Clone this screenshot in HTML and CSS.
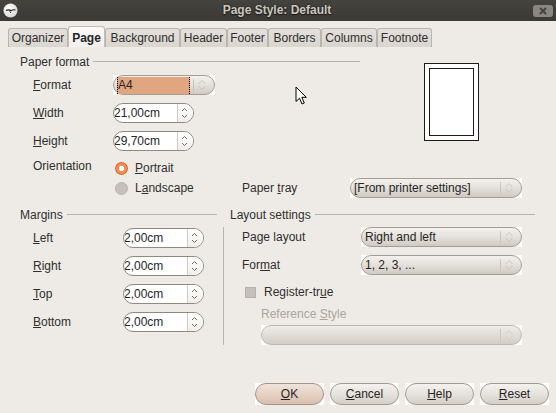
FILE: index.html
```html
<!DOCTYPE html>
<html>
<head>
<meta charset="utf-8">
<link rel="stylesheet" href="styles.css">
</head>
<body>
<div class="window">
  <header class="titlebar">
    <svg class="app-icon" width="15" height="15" viewBox="0 0 15 15">
      <defs><radialGradient id="ig" cx="0.4" cy="0.35" r="0.7"><stop offset="0" stop-color="#ffffff"/><stop offset="1" stop-color="#d6d6d6"/></radialGradient></defs>
      <circle cx="7.5" cy="7.5" r="7" fill="url(#ig)"/>
      <path d="M3 7.5 Q6 6 8 7.8 Q10 6.2 12.5 7" stroke="#222" stroke-width="1.2" fill="none"/>
      <path d="M6.5 8.5 L8 9.8" stroke="#222" stroke-width="1"/>
    </svg>
    <div class="title">Page Style: Default</div>
    <div class="close"><svg width="10" height="8" viewBox="0 0 10 8"><path d="M2 1 L8 7 M8 1 L2 7" stroke="#45433f" stroke-width="2"/></svg></div>
  </header>

  <nav class="tabs">
    <div class="tab w-org">Organizer</div>
    <div class="tab active w-page">Page</div>
    <div class="tab w-bg">Background</div>
    <div class="tab w-hdr">Header</div>
    <div class="tab w-ftr">Footer</div>
    <div class="tab w-bor">Borders</div>
    <div class="tab w-col">Columns</div>
    <div class="tab w-fn">Footnote</div>
  </nav>

  <main class="panel">
    <div class="paper-top">
      <section class="paper">
        <div class="sect-head">Paper format</div>
        <div class="field first">
          <span class="lbl"><u>F</u>ormat</span>
          <div class="combo w-format">
            <div class="pill">
              <span class="ctext selected">A4</span>
              <span class="sep"></span>
              <svg class="chev" width="10" height="14" viewBox="0 0 10 14"><path d="M1.5 6 L5 2.5 L8.5 6 M1.5 8 L5 11.5 L8.5 8" stroke="#c9c4bd" stroke-width="1" fill="none"/></svg>
            </div>
          </div>
        </div>
        <div class="field">
          <span class="lbl"><u>W</u>idth</span>
          <div class="spin"><span class="val">21,00cm</span><span class="spbtn"><svg width="7" height="14" viewBox="0 0 7 14"><path d="M1 5 L3.5 2.5 L6 5 M1 9 L3.5 11.5 L6 9" stroke="#6f6b65" stroke-width="1" fill="none"/></svg></span></div>
        </div>
        <div class="field">
          <span class="lbl"><u>H</u>eight</span>
          <div class="spin"><span class="val">29,70cm</span><span class="spbtn"><svg width="7" height="14" viewBox="0 0 7 14"><path d="M1 5 L3.5 2.5 L6 5 M1 9 L3.5 11.5 L6 9" stroke="#6f6b65" stroke-width="1" fill="none"/></svg></span></div>
        </div>
      </section>
      <div class="preview"><div class="page-inner"></div></div>
    </div>

    <div class="orient">
      <span class="olbl">Orientation</span>
      <div class="radio"><span class="rdot on"></span><span><u>P</u>ortrait</span></div>
      <span></span><span></span>
      <span></span>
      <div class="radio"><span class="rdot"></span><span>L<u>a</u>ndscape</span></div>
      <span class="tray-lbl">Paper <u>t</u>ray</span>
      <div class="combo w-tray">
        <div class="pill">
          <span class="ctext">[From printer settings]</span>
          <span class="sep"></span>
          <svg class="chev" width="10" height="14" viewBox="0 0 10 14"><path d="M1.5 6 L5 2.5 L8.5 6 M1.5 8 L5 11.5 L8.5 8" stroke="#c9c4bd" stroke-width="1" fill="none"/></svg>
        </div>
      </div>
    </div>

    <div class="bottom">
      <section class="margins">
        <div class="sect-head">Margins</div>
        <div class="field first"><span class="mlbl"><u>L</u>eft</span><div class="spin"><span class="val">2,00cm</span><span class="spbtn"><svg width="7" height="14" viewBox="0 0 7 14"><path d="M1 5 L3.5 2.5 L6 5 M1 9 L3.5 11.5 L6 9" stroke="#6f6b65" stroke-width="1" fill="none"/></svg></span></div></div>
        <div class="field"><span class="mlbl"><u>R</u>ight</span><div class="spin"><span class="val">2,00cm</span><span class="spbtn"><svg width="7" height="14" viewBox="0 0 7 14"><path d="M1 5 L3.5 2.5 L6 5 M1 9 L3.5 11.5 L6 9" stroke="#6f6b65" stroke-width="1" fill="none"/></svg></span></div></div>
        <div class="field"><span class="mlbl"><u>T</u>op</span><div class="spin"><span class="val">2,00cm</span><span class="spbtn"><svg width="7" height="14" viewBox="0 0 7 14"><path d="M1 5 L3.5 2.5 L6 5 M1 9 L3.5 11.5 L6 9" stroke="#6f6b65" stroke-width="1" fill="none"/></svg></span></div></div>
        <div class="field"><span class="mlbl"><u>B</u>ottom</span><div class="spin"><span class="val">2,00cm</span><span class="spbtn"><svg width="7" height="14" viewBox="0 0 7 14"><path d="M1 5 L3.5 2.5 L6 5 M1 9 L3.5 11.5 L6 9" stroke="#6f6b65" stroke-width="1" fill="none"/></svg></span></div></div>
      </section>

      <section class="layout">
        <div class="sect-head">Layout settings</div>
        <div class="layout-body">
          <div class="lrow">
            <span class="llbl">Page layout</span>
            <div class="combo w-layout">
              <div class="pill">
                <span class="ctext">Right and left</span>
                <span class="sep"></span>
                <svg class="chev" width="10" height="14" viewBox="0 0 10 14"><path d="M1.5 6 L5 2.5 L8.5 6 M1.5 8 L5 11.5 L8.5 8" stroke="#c9c4bd" stroke-width="1" fill="none"/></svg>
              </div>
            </div>
          </div>
          <div class="lrow gap">
            <span class="llbl">For<u>m</u>at</span>
            <div class="combo w-layout">
              <div class="pill">
                <span class="ctext">1, 2, 3, ...</span>
                <span class="sep"></span>
                <svg class="chev" width="10" height="14" viewBox="0 0 10 14"><path d="M1.5 6 L5 2.5 L8.5 6 M1.5 8 L5 11.5 L8.5 8" stroke="#c9c4bd" stroke-width="1" fill="none"/></svg>
              </div>
            </div>
          </div>
          <div class="check-row">
            <span class="checkbox"></span>
            <span>Register-tr<u>u</u>e</span>
          </div>
          <div class="ref-lbl">Reference <u>S</u>tyle</div>
          <div class="combo w-ref disabled">
            <div class="pill">
              <span class="ctext"></span>
              <span class="sep"></span>
              <svg class="chev" width="10" height="14" viewBox="0 0 10 14"><path d="M1.5 6 L5 2.5 L8.5 6 M1.5 8 L5 11.5 L8.5 8" stroke="#d2cdc6" stroke-width="1" fill="none"/></svg>
            </div>
          </div>
        </div>
      </section>
    </div>
  </main>

  <footer class="buttons">
    <div class="btn default"><span class="bpill"><u>O</u>K</span></div>
    <div class="btn"><span class="bpill"><u>C</u>ancel</span></div>
    <div class="btn"><span class="bpill"><u>H</u>elp</span></div>
    <div class="btn"><span class="bpill"><u>R</u>eset</span></div>
  </footer>
</div>

<svg class="cursor" width="13" height="20" viewBox="0 0 13 20">
  <path d="M1 1 L1 15.5 L4.5 12.2 L7 18 L9.3 17 L6.8 11.3 L11.3 11.3 Z" fill="#fff" stroke="#000" stroke-width="1" stroke-linejoin="round"/>
</svg>
</body>
</html>
```

FILE: styles.css
```css
html, body {
  margin: 0;
  padding: 0;
}
body {
  width: 556px;
  height: 413px;
  overflow: hidden;
  position: relative;
  background: #eeebe6;
  font-family: "Liberation Sans", Arial, sans-serif;
  font-size: 12px;
  color: #2f2f2f;
}
u { text-decoration: underline; text-underline-offset: 1px; }

.window {
  display: flex;
  flex-direction: column;
  height: 413px;
}

/* title bar */
.titlebar {
  flex: none;
  height: 21px;
  background: linear-gradient(#45433e, #3b3935);
  display: flex;
  align-items: center;
}
.app-icon { margin: 0 3px 0 3px; flex: none; }
.title {
  flex: 1;
  text-align: center;
  font-weight: bold;
  color: #cbc7bf;
  text-shadow: 0 0 2px #1c1b19, 0 1px 1px #1c1b19;
  line-height: 21px;
}
.close {
  flex: none;
  width: 20px;
  height: 12px;
  margin-right: 3px;
  border-radius: 3px;
  background: #8a8680;
  display: flex;
  align-items: center;
  justify-content: center;
}

/* tabs */
.tabs {
  flex: none;
  display: flex;
  align-items: flex-end;
  height: 21px;
  margin-top: 5px;
  padding-left: 8px;
}
.tab {
  box-sizing: border-box;
  height: 19px;
  line-height: 18px;
  text-align: center;
  border: 1px solid #b9b4ac;
  border-bottom: none;
  border-radius: 3px 3px 0 0;
  background: linear-gradient(#e4e0db, #d9d5cf);
  color: #2f2f2f;
  white-space: nowrap;
}
.tab.active {
  height: 21px;
  padding-top: 2px;
  background: linear-gradient(#fbfaf9, #f1efec);
  font-weight: bold;
  color: #262626;
  border-color: #c3beb6;
}
.w-org { width: 60px; }
.w-page { width: 37px; }
.w-bg { width: 75px; }
.w-hdr { width: 47px; }
.w-ftr { width: 41px; }
.w-bor { width: 53px; }
.w-col { width: 56px; }
.w-fn { width: 55px; }

/* panel */
.panel {
  display: flex;
  flex-direction: column;
}
.paper-top {
  display: flex;
  margin-top: 8px;
}
.paper {
  width: 340px;
  margin-left: 20px;
}
.sect-head {
  display: flex;
  align-items: center;
  height: 14px;
  line-height: 14px;
  white-space: nowrap;
}
.sect-head::after {
  content: "";
  flex: 1;
  height: 1px;
  background: #b8b3ab;
  margin-left: 4px;
  margin-top: -1px;
}
.field {
  display: flex;
  align-items: center;
  height: 20px;
  margin-top: 8px;
}
.field.first { margin-top: 6px; }
.lbl {
  width: 80px;
  margin-left: 13px;
  flex: none;
}
.mlbl {
  width: 90px;
  margin-left: 13px;
  flex: none;
}

/* preview */
.preview {
  margin-left: 64px;
  margin-top: 8px;
  width: 45px;
  height: 68px;
  padding: 4px;
  border: 1px solid #1e1c1a;
  background: #fff;
}
.page-inner {
  box-sizing: border-box;
  width: 45px;
  height: 68px;
  border: 1px solid #1e1c1a;
  background: #fff;
}

/* spin boxes */
.spin {
  box-sizing: border-box;
  display: flex;
  width: 81px;
  height: 20px;
  border: 1px solid #8f897f;
  border-radius: 10px;
  overflow: hidden;
  background: #fff;
  flex: none;
}
.spin .val {
  flex: 1;
  line-height: 18px;
  padding-left: 0;
  color: #262626;
}
.spbtn {
  width: 16px;
  border-left: 1px solid #cfcac3;
  background: linear-gradient(#ffffff, #f1efec);
  display: flex;
  align-items: center;
  justify-content: flex-start;
  padding-left: 3px;
  box-sizing: border-box;
}

/* combos */
.combo {
  background: #fff;
  height: 20px;
  flex: none;
}
.combo .pill {
  box-sizing: border-box;
  height: 20px;
  display: flex;
  align-items: center;
  border: 1px solid #a29d95;
  border-radius: 10px;
  background: linear-gradient(#f3f1ee 0%, #e6e2dd 45%, #cfcac3 100%);
  padding-right: 7px;
}
.combo .ctext {
  flex: 1;
  padding-left: 3px;
  line-height: 18px;
  color: #262626;
  white-space: nowrap;
  overflow: hidden;
}
.combo .ctext.selected {
  margin-left: 3px;
  margin-right: 3px;
  height: 17px;
  line-height: 17px;
  padding-left: 0;
  background: #e1a680;
  border-left: 1px dotted #000;
  border-right: 1px dotted #000;
}
.combo .sep {
  width: 1px;
  height: 13px;
  background: #c9c4bd;
  margin: 0 3px 0 0;
}
.combo .chev { flex: none; }
.w-format { width: 102px; }
.w-tray { width: 172px; }
.w-layout { width: 161px; }
.w-ref { width: 261px; margin-left: 19px; margin-top: 3px; }
.combo.disabled .pill {
  border-color: #bdb8b0;
  background: linear-gradient(#eeece9 0%, #e2ded9 45%, #d2cdc6 100%);
}

/* orientation */
.orient {
  display: grid;
  grid-template-columns: 80px 129px 108px 172px;
  grid-template-rows: 20px 20px;
  margin: 7px 0 0 33px;
  align-items: center;
}
.olbl {
  align-self: start;
  line-height: 16px;
}
.radio {
  display: flex;
  align-items: center;
  gap: 7px;
  padding-left: 2px;
}
.rdot {
  width: 13px;
  height: 13px;
  border-radius: 50%;
  box-sizing: border-box;
  background: #c7c1b9;
  border: 1px solid #b8b2aa;
}
.rdot.on {
  border: none;
  background: radial-gradient(circle, #ffffff 0 2.4px, #f38d55 3px 5px, #d8672f 5.6px 6.5px, transparent 6.6px);
}

/* bottom */
.bottom {
  display: flex;
  margin-top: 10px;
}
.margins {
  width: 197px;
  margin-left: 20px;
}
.layout {
  width: 312px;
  margin-left: 6px;
}
.layout .sect-head { padding-left: 7px; }
.layout-body {
  margin-top: 5px;
  height: 118px;
  border-left: 1px solid #b8b3ab;
  padding-left: 18px;
}
.lrow {
  display: flex;
  align-items: center;
  height: 20px;
}
.lrow.gap { margin-top: 8px; }
.llbl {
  width: 119px;
  flex: none;
}
.check-row {
  display: flex;
  align-items: center;
  height: 18px;
  margin-top: 8px;
  gap: 8px;
}
.checkbox {
  width: 11px;
  height: 11px;
  margin-left: 3px;
  box-sizing: border-box;
  background: #c6c0b8;
  border: 1px solid #b6b0a8;
}
.ref-lbl {
  height: 16px;
  line-height: 16px;
  margin-top: 5px;
  padding-left: 19px;
  color: #aaa59d;
}

/* buttons */
.buttons {
  margin-top: auto;
  display: flex;
  justify-content: flex-end;
  gap: 6px;
  padding: 0 7px 8px 0;
}
.btn {
  width: 69px;
  height: 22px;
  background: #fff;
}
.bpill {
  box-sizing: border-box;
  display: block;
  height: 22px;
  line-height: 20px;
  text-align: center;
  border: 1px solid #9f9a92;
  border-radius: 11px;
  background: linear-gradient(#f4f2ef 0%, #e6e2dd 50%, #d3cec7 100%);
  color: #262626;
}
.btn.default .bpill {
  border-color: #a3938a;
  background: linear-gradient(#f0e4da 0%, #e6d2c4 50%, #d8bfae 100%);
}

/* mouse pointer overlay */
.cursor {
  position: absolute;
  left: 295px;
  top: 86px;
}
```
